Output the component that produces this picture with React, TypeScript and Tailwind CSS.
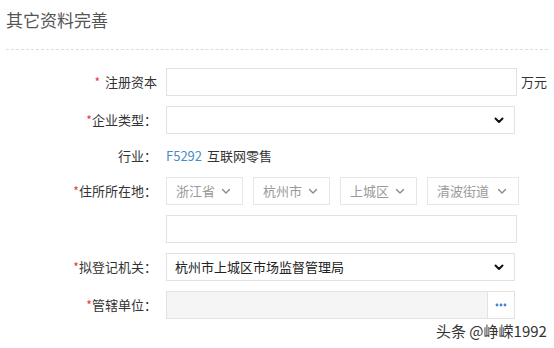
import React from "react";

const FONT = { fontFamily: '"Noto Sans CJK SC", "Noto Sans", sans-serif' };

function Chevron({ gray = false }: { gray?: boolean }) {
  return (
    <svg width="10" height="7" viewBox="0 0 10 7" className="shrink-0">
      <path
        d="M1.5 1.5 L5 5 L8.5 1.5"
        fill="none"
        stroke={gray ? "#8a8a8a" : "#111"}
        strokeWidth={gray ? 1.4 : 2}
        strokeLinecap="round"
        strokeLinejoin="round"
      />
    </svg>
  );
}

function Dots() {
  return (
    <svg width="12" height="4" viewBox="0 0 12 4">
      <circle cx="2" cy="2" r="1.4" fill="#3b86d0" />
      <circle cx="6" cy="2" r="1.4" fill="#3b86d0" />
      <circle cx="10" cy="2" r="1.4" fill="#3b86d0" />
    </svg>
  );
}

function Label({ text, star = true, colon = true, spaced = false }: { text: string; star?: boolean; colon?: boolean; spaced?: boolean }) {
  return (
    <div className="flex w-[157px] shrink-0 items-center justify-end text-[13px] text-[#333]">
      {star && <span className={`text-[#e4393c] text-[12px] ${spaced ? "mr-[5px]" : ""}`}>*</span>}
      <span>{text}</span>
      {colon && <span>：</span>}
    </div>
  );
}

function Row({ children, h = "h-[28px]" }: { children: React.ReactNode; h?: string }) {
  return <div className={`flex items-center gap-[9px] ${h}`}>{children}</div>;
}

function SmallSelect({ text, w }: { text: string; w: string }) {
  return (
    <div className={`flex h-[28px] items-center justify-between border border-[#e6e6e6] bg-white pl-[9px] pr-[11px] text-[13px] text-[#9a9a9a] ${w}`}>
      <span>{text}</span>
      <Chevron gray />
    </div>
  );
}

export default function App() {
  return (
    <div className="relative h-[348px] w-[554px] overflow-hidden bg-white" style={FONT}>
      <div className="px-[6px] pt-[8px]">
        <h2 className="text-[17px] leading-[24px] text-[#555]">其它资料完善</h2>
        <div className="mt-[17px] border-t border-dashed border-[#dcdcdc]" />
      </div>

      <div className="mt-[18px] flex flex-col gap-[10px]">
        <Row h="h-[28px]">
          <Label text="注册资本" colon={false} spaced />
          <div className="h-[28px] w-[351px] border border-[#e2e2e2] bg-white" />
          <span className="ml-[-5px] text-[13px] text-[#333]">万元</span>
        </Row>

        <Row>
          <Label text="企业类型" />
          <div className="flex h-[28px] w-[349px] items-center justify-end border border-[#e2e2e2] bg-white pr-[10px]">
            <Chevron />
          </div>
        </Row>

        <Row h="h-[23px]">
          <Label text="行业" star={false} />
          <div className="text-[13px]">
            <span className="text-[#4a8bc9]">F5292</span>
            <span className="ml-[5px] text-[#333]">互联网零售</span>
          </div>
        </Row>

        <Row>
          <Label text="住所所在地" />
          <div className="flex gap-[10px]">
            <SmallSelect text="浙江省" w="w-[77px]" />
            <SmallSelect text="杭州市" w="w-[77px]" />
            <SmallSelect text="上城区" w="w-[77px]" />
            <SmallSelect text="清波街道" w="w-[92px]" />
          </div>
        </Row>

        <Row>
          <div className="w-[157px] shrink-0" />
          <div className="h-[28px] w-[351px] border border-[#e2e2e2] bg-white" />
        </Row>

        <Row>
          <Label text="拟登记机关" />
          <div className="flex h-[28px] w-[349px] items-center justify-between border border-[#e2e2e2] bg-white pl-[8px] pr-[10px] text-[13px] text-[#222]">
            <span>杭州市上城区市场监督管理局</span>
            <Chevron />
          </div>
        </Row>

        <Row>
          <Label text="管辖单位" />
          <div className="flex h-[28px] w-[349px] border border-[#e2e2e2] bg-[#f5f5f5]">
            <div className="flex-1" />
            <div className="flex w-[27px] shrink-0 items-center justify-center border-l border-[#e2e2e2] bg-white">
              <Dots />
            </div>
          </div>
        </Row>
      </div>

      <div className="absolute left-[436px] top-[321px] text-[15px] leading-[20px] text-[#333]">头条 @峥嵘1992</div>
    </div>
  );
}
